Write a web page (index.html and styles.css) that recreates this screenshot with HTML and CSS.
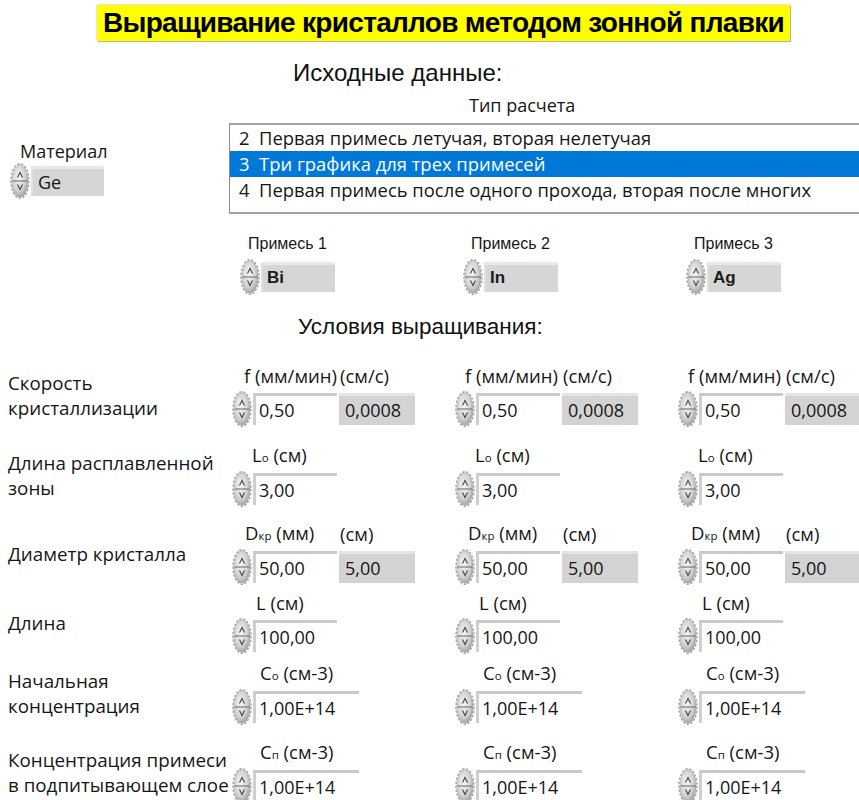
FILE: index.html
```html
<!DOCTYPE html>
<html lang="ru">
<head>
<meta charset="utf-8">
<title>Выращивание кристаллов методом зонной плавки</title>
<link rel="stylesheet" href="styles.css">
</head>
<body>
<svg class="defs" aria-hidden="true">
  <defs>
    <radialGradient id="knob" cx="42%" cy="40%" r="70%">
      <stop offset="0" stop-color="#f7f7f7"/>
      <stop offset="0.6" stop-color="#d0d0d0"/>
      <stop offset="1" stop-color="#8c8c8c"/>
    </radialGradient>
    <!-- increment / decrement knob -->
    <symbol id="spin" viewBox="0 0 20 36">
      <ellipse cx="10" cy="18" rx="9" ry="17.2" fill="none" stroke="#a2a2a2" stroke-width="1.4" stroke-dasharray="2.4 1.6"/>
      <ellipse cx="10" cy="18" rx="8.1" ry="16.3" fill="url(#knob)" stroke="#a8a8a8" stroke-width="0.6"/>
      <line x1="2.5" y1="18" x2="17.5" y2="18" stroke="#666" stroke-width="1"/>
      <path d="M7.5 14.5 L10 9.5 L12.5 14.5" fill="none" stroke="#444" stroke-width="1.1"/>
      <path d="M7.5 21.5 L10 26.5 L12.5 21.5" fill="none" stroke="#444" stroke-width="1.1"/>
    </symbol>
  </defs>
</svg>

<main class="panel">
  <h1 class="title">Выращивание кристаллов методом зонной плавки</h1>
  <h2 class="heading heading-src">Исходные данные:</h2>

  <section class="setup">
    <div class="material">
      <div class="cap">Материал</div>
      <div class="ctl"><svg class="spin"><use href="#spin"/></svg><div class="ring">Ge</div></div>
    </div>
    <div class="calc">
      <div class="cap calc-cap">Тип расчета</div>
      <ul class="listbox">
        <li>2&nbsp; Первая примесь летучая, вторая нелетучая</li>
        <li class="sel">3&nbsp; Три графика для трех примесей</li>
        <li>4&nbsp; Первая примесь после одного прохода, вторая после многих</li>
      </ul>
    </div>
  </section>

  <section class="dopants">
    <div class="dopant">
      <div class="dopant-cap">Примесь 1</div>
      <div class="ctl"><svg class="spin"><use href="#spin"/></svg><div class="ring dopant-ring">Bi</div></div>
    </div>
    <div class="dopant">
      <div class="dopant-cap">Примесь 2</div>
      <div class="ctl"><svg class="spin"><use href="#spin"/></svg><div class="ring dopant-ring">In</div></div>
    </div>
    <div class="dopant">
      <div class="dopant-cap">Примесь 3</div>
      <div class="ctl"><svg class="spin"><use href="#spin"/></svg><div class="ring dopant-ring">Ag</div></div>
    </div>
  </section>

  <h2 class="heading heading-grow">Условия выращивания:</h2>

  <section class="grid">
    <!-- crystallisation rate -->
    <div class="rowlabel">Скорость<br>кристаллизации</div>
    <div class="cell">
      <div class="caps"><span class="cap lead in12">f (мм/мин)</span><span class="cap">(см/с)</span></div>
      <div class="ctl"><svg class="spin"><use href="#spin"/></svg><div class="num">0,50</div><div class="ind">0,0008</div></div>
    </div>
    <div class="cell">
      <div class="caps"><span class="cap lead in10">f (мм/мин)</span><span class="cap">(см/с)</span></div>
      <div class="ctl"><svg class="spin"><use href="#spin"/></svg><div class="num">0,50</div><div class="ind">0,0008</div></div>
    </div>
    <div class="cell">
      <div class="caps"><span class="cap lead in10">f (мм/мин)</span><span class="cap">(см/с)</span></div>
      <div class="ctl"><svg class="spin"><use href="#spin"/></svg><div class="num">0,50</div><div class="ind">0,0008</div></div>
    </div>

    <!-- molten zone length -->
    <div class="rowlabel">Длина расплавленной<br>зоны</div>
    <div class="cell">
      <div class="caps"><span class="cap in20">L<small class="sub">o</small> (см)</span></div>
      <div class="ctl"><svg class="spin"><use href="#spin"/></svg><div class="num">3,00</div></div>
    </div>
    <div class="cell">
      <div class="caps"><span class="cap in20">L<small class="sub">o</small> (см)</span></div>
      <div class="ctl"><svg class="spin"><use href="#spin"/></svg><div class="num">3,00</div></div>
    </div>
    <div class="cell">
      <div class="caps"><span class="cap in20">L<small class="sub">o</small> (см)</span></div>
      <div class="ctl"><svg class="spin"><use href="#spin"/></svg><div class="num">3,00</div></div>
    </div>

    <!-- crystal diameter -->
    <div class="rowlabel">Диаметр кристалла</div>
    <div class="cell">
      <div class="caps"><span class="cap lead in13">D<small class="sub">кр</small> (мм)</span><span class="cap">(см)</span></div>
      <div class="ctl"><svg class="spin"><use href="#spin"/></svg><div class="num">50,00</div><div class="ind">5,00</div></div>
    </div>
    <div class="cell">
      <div class="caps"><span class="cap lead in13">D<small class="sub">кр</small> (мм)</span><span class="cap">(см)</span></div>
      <div class="ctl"><svg class="spin"><use href="#spin"/></svg><div class="num">50,00</div><div class="ind">5,00</div></div>
    </div>
    <div class="cell">
      <div class="caps"><span class="cap lead in13">D<small class="sub">кр</small> (мм)</span><span class="cap">(см)</span></div>
      <div class="ctl"><svg class="spin"><use href="#spin"/></svg><div class="num">50,00</div><div class="ind">5,00</div></div>
    </div>

    <!-- ingot length -->
    <div class="rowlabel">Длина</div>
    <div class="cell">
      <div class="caps"><span class="cap in24">L (см)</span></div>
      <div class="ctl"><svg class="spin"><use href="#spin"/></svg><div class="num">100,00</div></div>
    </div>
    <div class="cell">
      <div class="caps"><span class="cap in24">L (см)</span></div>
      <div class="ctl"><svg class="spin"><use href="#spin"/></svg><div class="num">100,00</div></div>
    </div>
    <div class="cell">
      <div class="caps"><span class="cap in24">L (см)</span></div>
      <div class="ctl"><svg class="spin"><use href="#spin"/></svg><div class="num">100,00</div></div>
    </div>

    <!-- initial concentration -->
    <div class="rowlabel">Начальная<br>концентрация</div>
    <div class="cell">
      <div class="caps"><span class="cap in28">C<small class="sub">o</small> (см-3)</span></div>
      <div class="ctl"><svg class="spin"><use href="#spin"/></svg><div class="num wide">1,00E+14</div></div>
    </div>
    <div class="cell">
      <div class="caps"><span class="cap in28">C<small class="sub">o</small> (см-3)</span></div>
      <div class="ctl"><svg class="spin"><use href="#spin"/></svg><div class="num wide">1,00E+14</div></div>
    </div>
    <div class="cell">
      <div class="caps"><span class="cap in28">C<small class="sub">o</small> (см-3)</span></div>
      <div class="ctl"><svg class="spin"><use href="#spin"/></svg><div class="num wide">1,00E+14</div></div>
    </div>

    <!-- feed layer concentration -->
    <div class="rowlabel">Концентрация примеси<br>в подпитывающем слое</div>
    <div class="cell">
      <div class="caps"><span class="cap in28">C<small class="sub">п</small> (см-3)</span></div>
      <div class="ctl"><svg class="spin"><use href="#spin"/></svg><div class="num wide">1,00E+14</div></div>
    </div>
    <div class="cell">
      <div class="caps"><span class="cap in28">C<small class="sub">п</small> (см-3)</span></div>
      <div class="ctl"><svg class="spin"><use href="#spin"/></svg><div class="num wide">1,00E+14</div></div>
    </div>
    <div class="cell">
      <div class="caps"><span class="cap in28">C<small class="sub">п</small> (см-3)</span></div>
      <div class="ctl"><svg class="spin"><use href="#spin"/></svg><div class="num wide">1,00E+14</div></div>
    </div>
  </section>
</main>
</body>
</html>
```

FILE: styles.css
```css
* { box-sizing: border-box; }

body {
  margin: 0;
  width: 859px;
  height: 800px;
  overflow: hidden;
  background: #fff;
  color: #161616;
  font-family: "Open Sans", "Noto Sans", sans-serif;
}

.defs { position: absolute; width: 0; height: 0; overflow: hidden; }

.panel { padding-top: 5px; }

/* yellow banner */
.title {
  margin: 0 0 0 97px;
  width: 693px;
  height: 36px;
  background: #ffff00;
  box-shadow: 1px 1px 0 #b8b890, 0 0 2px rgba(0, 0, 0, 0.35);
  font: bold 28px/36px "Liberation Sans", Arial, sans-serif;
  letter-spacing: -0.7px;
  color: #000;
  text-align: center;
  white-space: nowrap;
}

.heading {
  margin: 0;
  font: normal 24px/28px "Liberation Sans", Arial, sans-serif;
  color: #111;
  white-space: nowrap;
}
.heading-src { margin: 18px 0 0 293px; }
.heading-grow { margin: 17px 0 0 298px; font-size: 22.5px; }

.cap { font-size: 18px; line-height: 22px; white-space: nowrap; }

/* material + calculation type */
.setup { display: flex; align-items: flex-start; padding-left: 10px; margin-top: 7px; }
.material { width: 219px; flex: none; margin-top: 46px; }
.material .cap { padding-left: 10px; }
.calc { width: 640px; flex: none; }
.calc-cap { padding-left: 240px; margin-bottom: 7px; }

.listbox {
  list-style: none;
  margin: 0;
  padding: 0 0 9px;
  border-top: 2px solid #a3a3a3;
  border-left: 1px solid #8a8a8a;
  border-bottom: 2px solid #a3a3a3;
  font-size: 18.4px;
}
.listbox li { height: 26px; line-height: 26px; padding-left: 9px; white-space: nowrap; }
.listbox .sel { background: #0078d7; color: #fff; }

/* knob + field */
.ctl { display: flex; align-items: center; height: 38px; }
.spin { width: 20px; height: 36px; flex: none; margin-right: 1px; }

.ring {
  width: 73px;
  height: 30px;
  background: #d6d6d6;
  border-top: 3px solid #e9e9e9;
  border-left: 2px solid #e0e0e0;
  padding-left: 5px;
  font-size: 18px;
  line-height: 26px;
}

.dopants { display: flex; padding-left: 240px; margin-top: 20px; }
.dopant { width: 223px; flex: none; }
.dopant-cap {
  font: 16px/20px "Liberation Sans", Arial, sans-serif;
  padding-left: 8px;
  margin-bottom: 4px;
}
.dopant-ring { width: 74px; padding-left: 4px; font-family: "Liberation Sans", Arial, sans-serif; font-size: 17px; font-weight: bold; color: #1c1c1c; }

/* growth conditions table */
.grid {
  display: grid;
  grid-template-columns: 224px 223px 223px 1fr;
  grid-template-rows: 80px 78px 69px 71px 79px 64px;
  align-items: start;
  padding-left: 8px;
  margin-top: 23px;
}

.rowlabel {
  height: 64px;
  display: flex;
  align-items: center;
  font-size: 18.8px;
  line-height: 25px;
  white-space: nowrap;
}

.caps { display: flex; align-items: center; height: 24px; margin-bottom: 2px; }
.caps .cap { font-size: 18.5px; }
.lead { width: 108px; flex: none; }
.in10 { padding-left: 10px; }
.in12 { padding-left: 12px; }
.in13 { padding-left: 13px; }
.in20 { padding-left: 20px; }
.in24 { padding-left: 24px; }
.in28 { padding-left: 28px; }

.sub { font-size: 11.5px; }

.num {
  width: 84px;
  height: 32px;
  background: #fff;
  border-top: 3px solid #c9c9c9;
  border-left: 3px solid #cfcfcf;
  padding-left: 3px;
  font-size: 18px;
  line-height: 28px;
  white-space: nowrap;
}
.num.wide { width: 106px; }

.ind {
  width: 76px;
  height: 32px;
  margin-left: 2px;
  background: #d3d3d3;
  border-top: 3px solid #e4e4e4;
  padding-left: 6px;
  font-size: 18px;
  line-height: 28px;
  white-space: nowrap;
}
```
